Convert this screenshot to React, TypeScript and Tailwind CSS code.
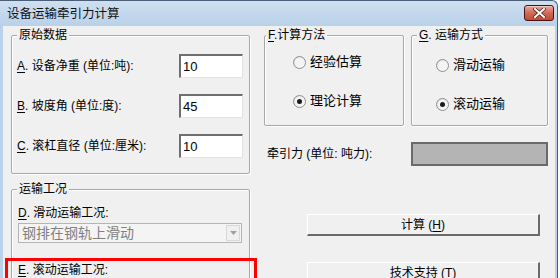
import type { ReactNode } from "react";

const font = "font-['Liberation_Sans','Noto_Sans_CJK_SC',sans-serif]";

function Key({ k }: { k: string }) {
  return <span className="underline underline-offset-[2px]">{k}</span>;
}

function Group({
  title,
  className,
  legendClass = "ml-[5px]",
  children,
}: {
  title: ReactNode;
  className: string;
  legendClass?: string;
  children?: ReactNode;
}) {
  return (
    <div
      className={`flex flex-col border border-[#a8a8a8] rounded-[2px] shadow-[inset_1px_1px_0_#ffffff,1px_1px_0_#ffffff] ${className}`}
    >
      <div className={`-mt-[8px] h-[14px] w-fit bg-[#f0f0f0] px-[2px] leading-[14px] ${legendClass}`}>{title}</div>
      {children}
    </div>
  );
}

function TextBox({ value }: { value: string }) {
  return (
    <div className="flex h-[24px] w-[64px] items-center border-t-2 border-l-2 border-r border-b border-t-[#6f6f6f] border-l-[#6f6f6f] border-r-[#e3e3e3] border-b-[#e3e3e3] bg-white pl-[2px] font-['Liberation_Sans',sans-serif] text-[13px]">
      {value}
    </div>
  );
}

function Radio({ label, checked }: { label: string; checked?: boolean }) {
  return (
    <div className="flex items-center gap-[4px]">
      <div className="flex h-[13px] w-[13px] items-center justify-center rounded-full border border-[#8e8f8f] bg-gradient-to-br from-[#dcdcdc] to-[#ffffff]">
        <div className="flex h-[9px] w-[9px] items-center justify-center rounded-full bg-[#f4f4f4]">
          {checked && <div className="h-[5px] w-[5px] rounded-full bg-[#1a1a1a]" />}
        </div>
      </div>
      <span className="text-[13px] leading-[14px]">{label}</span>
    </div>
  );
}

function Button({ children, className }: { children: ReactNode; className: string }) {
  return (
    <div
      className={`flex h-[22px] w-[233px] items-center justify-center border-t border-l border-r-2 border-b-2 border-t-white border-l-white border-r-[#6a6a6a] border-b-[#6a6a6a] bg-[#f0f0f0] leading-[14px] ${className}`}
    >
      {children}
    </div>
  );
}

function Combo({ value }: { value: string }) {
  return (
    <div className="flex h-[20px] w-[224px] items-center justify-between border border-[#b5b5b5] bg-[#f4f4f4] pl-[3px] pr-[1px]">
      <span className="text-[14px] leading-[16px] text-[#808080]">{value}</span>
      <div className="flex h-[16px] w-[14px] items-center justify-center border border-[#d8d8d8] bg-[#f0f0f0]">
        <svg width="7" height="4" viewBox="0 0 7 4">
          <path d="M0 0 H7 L3.5 4 Z" fill="#a0a0a0" />
        </svg>
      </div>
    </div>
  );
}

export default function App() {
  return (
    <div className={`relative h-[278px] w-[560px] overflow-hidden bg-white text-[12px] text-black ${font}`}>
      <div className="flex h-[278px] w-[558px] flex-col rounded-tr-[6px] border-r border-t border-[#4c5f78] bg-[#b9d1ea]">
        {/* title bar */}
        <div className="flex h-[25px] shrink-0 items-center justify-between rounded-tr-[6px] bg-gradient-to-b from-[#cfdff0] to-[#b9d1ea] pl-[7px] pr-[3px]">
          <span className="pt-[1px] text-[12.5px] leading-[14px] text-[#111]">设备运输牵引力计算</span>
          <div className="mb-[2px] flex h-[16px] w-[30px] items-center justify-center rounded-[3px] border border-[#4a1410] bg-gradient-to-b from-[#e9a89a] via-[#cf6a58] to-[#c14a38] shadow-[inset_0_1px_0_#f3c5bb]">
            <svg width="13" height="10" viewBox="0 0 13 10">
              <path d="M2 1 L11 9 M11 1 L2 9" stroke="#5a2a22" strokeWidth="3.6" strokeLinecap="square" />
              <path d="M2 1 L11 9 M11 1 L2 9" stroke="#ffffff" strokeWidth="2" strokeLinecap="square" />
            </svg>
          </div>
        </div>

        {/* client area */}
        <div className="ml-[3px] mr-[2px] flex flex-1 bg-[#f0f0f0] pl-[8px]">
          {/* left column */}
          <div className="flex w-[239px] flex-col">
            <Group title="原始数据" className="mt-[9px] h-[139px]">
              <div className="mt-[12px] flex flex-col gap-[16px] pl-[5px] pr-[6px]">
                <div className="flex items-center justify-between">
                  <span className="leading-[14px]">
                    <Key k="A" />. 设备净重 (单位:吨):
                  </span>
                  <TextBox value="10" />
                </div>
                <div className="flex items-center justify-between">
                  <span className="leading-[14px]">
                    <Key k="B" />. 坡度角 (单位:度):
                  </span>
                  <TextBox value="45" />
                </div>
                <div className="flex items-center justify-between">
                  <span className="leading-[14px]">
                    <Key k="C" />. 滚杠直径 (单位:厘米):
                  </span>
                  <TextBox value="10" />
                </div>
              </div>
            </Group>

            <Group title="运输工况" className="mt-[15px] h-[120px]">
              <div className="flex flex-col pl-[6px]">
                <span className="mt-[10px] leading-[14px]">
                  <Key k="D" />. 滑动运输工况:
                </span>
                <div className="mt-[3px]">
                  <Combo value="钢排在钢轨上滑动" />
                </div>
                <span className="mt-[20px] leading-[14px]">
                  <Key k="E" />. 滚动运输工况:
                </span>
                <div className="mt-[2px]">
                  <Combo value="" />
                </div>
              </div>
            </Group>
          </div>

          {/* right column */}
          <div className="ml-[14px] flex flex-col">
            <div className="mt-[9px] flex gap-[7px]">
              <Group
                title={
                  <span>
                    <Key k="F" />.计算方法
                  </span>
                }
                legendClass="ml-[1px]"
                className="h-[91px] w-[140px]"
              >
                <div className="ml-[28px] mt-[13px] flex flex-col gap-[25px]">
                  <Radio label="经验估算" />
                  <Radio label="理论计算" checked />
                </div>
              </Group>
              <Group
                title={
                  <span>
                    <Key k="G" />. 运输方式
                  </span>
                }
                className="h-[91px] w-[137px]"
              >
                <div className="ml-[24px] mt-[16px] flex flex-col gap-[25px]">
                  <Radio label="滑动运输" />
                  <Radio label="滚动运输" checked />
                </div>
              </Group>
            </div>

            <div className="mt-[16px] flex items-center justify-between pl-[3px]">
              <span className="leading-[14px]">牵引力 (单位: 吨力):</span>
              <div className="h-[24px] w-[137px] border-2 border-[#6a6a6a] bg-[#b4b4b4]" />
            </div>

            <Button className="ml-[43px] mt-[48px]">
              计算 (<Key k="H" />)
            </Button>
            <Button className="ml-[43px] mt-[26px]">
              技术支持 (<Key k="T" />)
            </Button>
          </div>
        </div>
      </div>

      {/* red annotation box */}
      <div className="absolute left-[5px] top-[258px] h-[30px] w-[252px] border-[3px] border-[#ff0000]" />
    </div>
  );
}
